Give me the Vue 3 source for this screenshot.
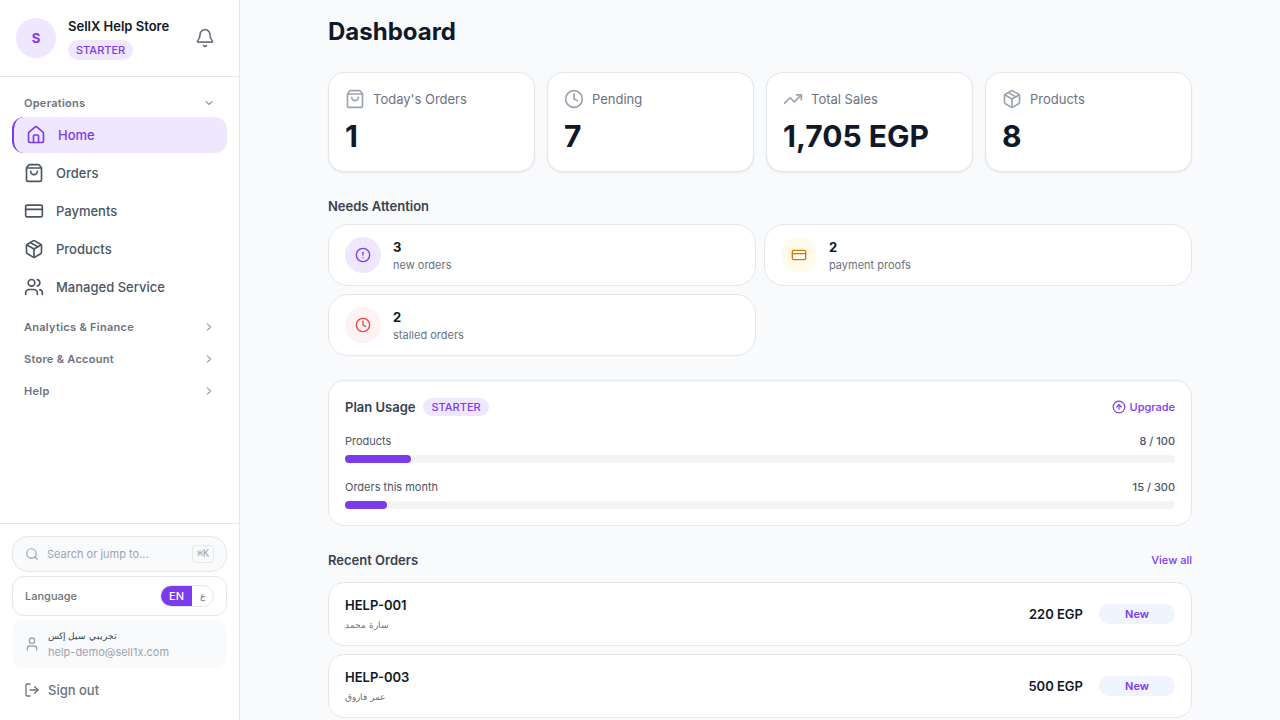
<script setup>
import { ref } from 'vue'

const icons = {
  bell: ['M10.268 21a2 2 0 0 0 3.464 0', 'M3.262 15.326A1 1 0 0 0 4 17h16a1 1 0 0 0 .74-1.673C19.41 13.956 18 12.499 18 8A6 6 0 0 0 6 8c0 4.499-1.411 5.956-2.738 7.326'],
  home: ['M15 21v-8a1 1 0 0 0-1-1h-4a1 1 0 0 0-1 1v8', 'M3 10a2 2 0 0 1 .709-1.528l7-6a2 2 0 0 1 2.582 0l7 6A2 2 0 0 1 21 10v9a2 2 0 0 1-2 2H5a2 2 0 0 1-2-2z'],
  bag: ['M16 10a4 4 0 0 1-8 0', 'M3.103 6.034h17.794', 'M3.4 5.467a2 2 0 0 0-.4 1.2V20a2 2 0 0 0 2 2h14a2 2 0 0 0 2-2V6.667a2 2 0 0 0-.4-1.2l-2-2.667A2 2 0 0 0 17 2H7a2 2 0 0 0-1.6.8z'],
  card: ['M4 5h16a2 2 0 0 1 2 2v10a2 2 0 0 1-2 2H4a2 2 0 0 1-2-2V7a2 2 0 0 1 2-2z', 'M2 10h20'],
  box: ['M11 21.73a2 2 0 0 0 2 0l7-4A2 2 0 0 0 21 16V8a2 2 0 0 0-1-1.73l-7-4a2 2 0 0 0-2 0l-7 4A2 2 0 0 0 3 8v8a2 2 0 0 0 1 1.73z', 'M12 22V12', 'M3.29 7 12 12l8.71-5', 'm7.5 4.27 9 5.15'],
  users: ['M16 21v-2a4 4 0 0 0-4-4H6a4 4 0 0 0-4 4v2', 'M16 3.128a4 4 0 0 1 0 7.744', 'M22 21v-2a4 4 0 0 0-3-3.87', 'M13 7a4 4 0 1 1-8 0 4 4 0 0 1 8 0z'],
  user: ['M19 21v-2a4 4 0 0 0-4-4H9a4 4 0 0 0-4 4v2', 'M16 7a4 4 0 1 1-8 0 4 4 0 0 1 8 0z'],
  search: ['m21 21-4.34-4.34', 'M19 11a8 8 0 1 1-16 0 8 8 0 0 1 16 0z'],
  logout: ['m16 17 5-5-5-5', 'M21 12H9', 'M9 21H5a2 2 0 0 1-2-2V5a2 2 0 0 1 2-2h4'],
  clock: ['M22 12a10 10 0 1 1-20 0 10 10 0 0 1 20 0z', 'M12 6v6l4 2'],
  trend: ['M16 7h6v6', 'm22 7-8.5 8.5-5-5L2 17'],
  alert: ['M22 12a10 10 0 1 1-20 0 10 10 0 0 1 20 0z', 'M12 8v4', 'M12 16h.01'],
  up: ['M22 12a10 10 0 1 1-20 0 10 10 0 0 1 20 0z', 'm16 12-4-4-4 4', 'M12 16V8'],
  down: ['m6 9 6 6 6-6'],
  right: ['m9 18 6-6-6-6'],
}

const nav = [
  { label: 'Home', icon: 'home' },
  { label: 'Orders', icon: 'bag' },
  { label: 'Payments', icon: 'card' },
  { label: 'Products', icon: 'box' },
  { label: 'Managed Service', icon: 'users' },
]
const groups = ['Analytics & Finance', 'Store & Account', 'Help']
const stats = [
  { label: "Today's Orders", value: '1', icon: 'bag' },
  { label: 'Pending', value: '7', icon: 'clock' },
  { label: 'Total Sales', value: '1,705 EGP', icon: 'trend' },
  { label: 'Products', value: '8', icon: 'box' },
]
const attention = [
  { count: 3, label: 'new orders', icon: 'alert', tone: 'violet' },
  { count: 2, label: 'payment proofs', icon: 'card', tone: 'amber' },
  { count: 2, label: 'stalled orders', icon: 'clock', tone: 'red' },
]
const usage = [
  { label: 'Products', used: 8, limit: 100 },
  { label: 'Orders this month', used: 15, limit: 300 },
]
const orders = [
  { id: 'HELP-001', customer: 'سارة محمد', total: '220 EGP', status: 'New' },
  { id: 'HELP-003', customer: 'عمر فاروق', total: '500 EGP', status: 'New' },
]
const active = ref('Home')
const open = ref(true)
const lang = ref('en')
</script>

<template>
  <div class="app">
    <aside class="sidebar">
      <header class="store">
        <div class="avatar">S</div>
        <div class="store-info">
          <div class="store-name">SellX Help Store</div>
          <span class="badge tall">STARTER</span>
        </div>
        <button class="bell" type="button" aria-label="Notifications">
          <svg class="i20" viewBox="0 0 24 24"><path v-for="d in icons.bell" :key="d" :d="d" /></svg>
        </button>
      </header>

      <nav class="nav">
        <button class="group" type="button" :aria-expanded="open" @click="open = !open">
          Operations
          <svg class="i12" viewBox="0 0 24 24"><path v-for="d in icons.down" :key="d" :d="d" /></svg>
        </button>
        <div v-if="open" class="items">
          <a v-for="n in nav" :key="n.label" href="#" class="item" :class="{ active: active === n.label }" @click.prevent="active = n.label">
            <svg class="i20" viewBox="0 0 24 24"><path v-for="d in icons[n.icon]" :key="d" :d="d" /></svg>
            {{ n.label }}
          </a>
        </div>
        <div class="groups">
          <button v-for="g in groups" :key="g" class="group" type="button" aria-expanded="false">
            {{ g }}
            <svg class="i12" viewBox="0 0 24 24"><path v-for="d in icons.right" :key="d" :d="d" /></svg>
          </button>
        </div>
      </nav>

      <footer class="foot">
        <button class="search" type="button">
          <svg class="i14" viewBox="0 0 24 24"><path v-for="d in icons.search" :key="d" :d="d" /></svg>
          <span class="grow">Search or jump to...</span>
          <kbd>⌘K</kbd>
        </button>
        <div class="language">
          <span>Language</span>
          <div class="toggle" role="group" aria-label="Language">
            <button type="button" :class="{ on: lang === 'en' }" @click="lang = 'en'">EN</button>
            <button type="button" class="arabic" :class="{ on: lang === 'ar' }" lang="ar" @click="lang = 'ar'">ع</button>
          </div>
        </div>
        <div class="account">
          <svg class="i16" viewBox="0 0 24 24"><path v-for="d in icons.user" :key="d" :d="d" /></svg>
          <div>
            <div class="acc-name arabic" lang="ar">تجريبي سيل إكس</div>
            <div class="acc-mail">help-demo@sell1x.com</div>
          </div>
        </div>
        <button class="signout" type="button">
          <svg class="i16" viewBox="0 0 24 24"><path v-for="d in icons.logout" :key="d" :d="d" /></svg>
          Sign out
        </button>
      </footer>
    </aside>

    <main class="main">
      <div class="content">
        <h1>Dashboard</h1>

        <section class="stats">
          <article v-for="s in stats" :key="s.label" class="stat">
            <div class="stat-label">
              <svg class="i20" viewBox="0 0 24 24"><path v-for="d in icons[s.icon]" :key="d" :d="d" /></svg>
              {{ s.label }}
            </div>
            <div class="stat-value">{{ s.value }}</div>
          </article>
        </section>

        <section>
          <h2 class="attention-title">Needs Attention</h2>
          <div class="attention">
            <a v-for="a in attention" :key="a.label" href="#" class="alert">
              <span class="dot" :class="a.tone">
                <svg class="i16" viewBox="0 0 24 24"><path v-for="d in icons[a.icon]" :key="d" :d="d" /></svg>
              </span>
              <span>
                <strong>{{ a.count }}</strong>
                <small>{{ a.label }}</small>
              </span>
            </a>
          </div>
        </section>

        <section class="plan">
          <div class="row">
            <div class="plan-title">
              <h2>Plan Usage</h2>
              <span class="badge">STARTER</span>
            </div>
            <a href="#" class="link">
              <svg class="i14" viewBox="0 0 24 24"><path v-for="d in icons.up" :key="d" :d="d" /></svg>
              Upgrade
            </a>
          </div>
          <div v-for="u in usage" :key="u.label">
            <div class="row small">
              <span>{{ u.label }}</span>
              <span class="amount">{{ u.used }} / {{ u.limit }}</span>
            </div>
            <div class="track">
              <div class="fill" :style="{ width: (u.used / u.limit) * 100 + '%' }"></div>
            </div>
          </div>
        </section>

        <section>
          <div class="row orders-head">
            <h2>Recent Orders</h2>
            <a href="#" class="link">View all</a>
          </div>
          <div class="orders">
            <a v-for="o in orders" :key="o.id" href="#" class="order">
              <span class="grow">
                <span class="order-id">{{ o.id }}</span>
                <span class="customer arabic" lang="ar">{{ o.customer }}</span>
              </span>
              <span class="total">{{ o.total }}</span>
              <span class="status">{{ o.status }}</span>
            </a>
          </div>
        </section>
      </div>
    </main>
  </div>
</template>

<style>
body {
  background: #f9fafb;
}
</style>

<style scoped>
.app,
.app * {
  box-sizing: border-box;
}
.app {
  display: flex;
  height: 100vh;
  font-family: Inter, sans-serif;
  font-size: 13px;
  line-height: 20px;
  color: #111827;
  background: #f9fafb;
}
button {
  font: inherit;
  color: inherit;
  background: none;
  border: 0;
  padding: 0;
  text-align: left;
  cursor: pointer;
}
a {
  color: inherit;
  text-decoration: none;
}
h1,
h2 {
  margin: 0;
}
h2 {
  font-size: 13px;
  line-height: 20px;
  font-weight: 600;
  color: #374151;
}
svg {
  flex: none;
  display: block;
  fill: none;
  stroke: currentColor;
  stroke-width: 2;
  stroke-linecap: round;
  stroke-linejoin: round;
}
.i20 {
  width: 20px;
  height: 20px;
}
.i16 {
  width: 16px;
  height: 16px;
}
.i14 {
  width: 14px;
  height: 14px;
}
.i12 {
  width: 12px;
  height: 12px;
  stroke-width: 2.5;
}
.grow {
  flex: 1;
  min-width: 0;
}

.sidebar {
  flex: none;
  width: 240px;
  display: flex;
  flex-direction: column;
  background: #fff;
  border-right: 1px solid #e5e7eb;
}
.store {
  display: flex;
  align-items: center;
  gap: 12px;
  padding: 16px;
  border-bottom: 1px solid #e5e7eb;
}
.avatar {
  display: grid;
  place-items: center;
  width: 40px;
  height: 40px;
  border-radius: 50%;
  background: #efe7fe;
  color: #7c3aed;
  font-weight: 700;
}
.store-info {
  flex: 1;
  display: flex;
  flex-direction: column;
  align-items: flex-start;
  gap: 4px;
}
.store-name {
  font-weight: 600;
}
.badge {
  padding: 1px 8px;
  border-radius: 999px;
  background: #efe7fe;
  color: #7c3aed;
  font-size: 11px;
  line-height: 16px;
  font-weight: 500;
}
.badge.tall {
  padding: 2px 8px;
}
.bell {
  padding: 8px;
  color: #6b7280;
}
.nav {
  flex: 1;
  min-height: 0;
  padding: 12px;
}
.group {
  display: flex;
  align-items: center;
  justify-content: space-between;
  width: 100%;
  padding: 6px 12px;
  font-size: 11px;
  line-height: 16px;
  font-weight: 600;
  letter-spacing: 0.025em;
  color: #6b7280;
}
.group svg {
  color: #9ca3af;
}
.items {
  display: flex;
  flex-direction: column;
  gap: 2px;
}
.item {
  display: flex;
  align-items: center;
  gap: 12px;
  padding: 8px 12px;
  border-radius: 12px;
  font-weight: 500;
  color: #4b5563;
}
.item.active {
  background: #efe7fe;
  color: #7c3aed;
  border-left: 2px solid #7c3aed;
}
.groups {
  display: flex;
  flex-direction: column;
  gap: 4px;
  margin-top: 8px;
}
.foot {
  display: flex;
  flex-direction: column;
  gap: 4px;
  padding: 12px;
  border-top: 1px solid #e5e7eb;
}
.search,
.language,
.account,
.signout {
  display: flex;
  align-items: center;
  padding: 0 12px;
  font-size: 11px;
  line-height: 16px;
}
.search {
  gap: 8px;
  min-height: 36px;
  border: 1px solid #e5e7eb;
  border-radius: 16px;
  background: #f9fafb;
  color: #9ca3af;
}
kbd {
  padding: 0 4px;
  border: 1px solid #e5e7eb;
  border-radius: 4px;
  font-family: "DejaVu Sans Mono", monospace;
  font-size: 10px;
  line-height: 16px;
}
.language {
  justify-content: space-between;
  min-height: 40px;
  border: 1px solid #e5e7eb;
  border-radius: 12px;
  color: #6b7280;
  font-weight: 500;
}
.toggle {
  display: flex;
  overflow: hidden;
  border: 1px solid #e5e7eb;
  border-radius: 999px;
}
.toggle button {
  padding: 2px 8px;
}
.toggle .on {
  background: #7c3aed;
  color: #fff;
}
.account {
  gap: 8px;
  min-height: 48px;
  border-radius: 12px;
  background: #f9fafb;
  color: #9ca3af;
}
.acc-name {
  color: #374151;
  font-weight: 500;
}
.signout {
  gap: 8px;
  min-height: 36px;
  font-size: 13px;
  line-height: 20px;
  font-weight: 500;
  color: #6b7280;
}

.main {
  flex: 1;
  min-width: 0;
  overflow: hidden auto;
  scrollbar-width: none;
}
.content {
  display: flex;
  flex-direction: column;
  gap: 24px;
  max-width: 896px;
  margin: 0 auto;
  padding: 16px;
}
h1 {
  font-size: 24px;
  line-height: 32px;
  font-weight: 700;
}
.stats {
  display: grid;
  grid-template-columns: repeat(4, 1fr);
  gap: 12px;
}
.stat {
  padding: 16px;
  border: 1px solid #e5e7eb;
  border-radius: 16px;
  background: #fff;
  box-shadow: 0 1px 2px rgba(0, 0, 0, 0.08);
}
.stat-label {
  display: flex;
  align-items: center;
  gap: 8px;
  margin-bottom: 8px;
  color: #6b7280;
}
.stat-label svg {
  color: #9ca3af;
}
.stat-value {
  font-size: 30px;
  line-height: 38px;
  font-weight: 700;
}
.attention-title {
  margin-bottom: 8px;
}
.attention {
  display: grid;
  grid-template-columns: repeat(2, 1fr);
  gap: 8px;
}
.alert {
  display: flex;
  align-items: center;
  gap: 12px;
  padding: 12px 16px;
  border: 1px solid #e5e7eb;
  border-radius: 20px;
  background: #fff;
}
.dot {
  display: grid;
  place-items: center;
  width: 36px;
  height: 36px;
  border-radius: 50%;
}
.violet {
  background: #efe7fe;
  color: #7c3aed;
}
.amber {
  background: #fffbeb;
  color: #d97706;
}
.red {
  background: #fef2f2;
  color: #ef4444;
}
.alert strong,
.alert small {
  display: block;
}
.alert strong {
  font-weight: 700;
}
.alert small {
  font-size: 11px;
  line-height: 16px;
  color: #6b7280;
}
.plan {
  display: flex;
  flex-direction: column;
  gap: 16px;
  padding: 16px;
  border: 1px solid #e5e7eb;
  border-radius: 16px;
  background: #fff;
}
.row {
  display: flex;
  align-items: center;
  justify-content: space-between;
}
.plan-title {
  display: flex;
  align-items: center;
  gap: 8px;
}
.link {
  display: flex;
  align-items: center;
  gap: 4px;
  font-size: 11px;
  line-height: 16px;
  font-weight: 500;
  color: #7c3aed;
}
.small {
  margin-bottom: 6px;
  font-size: 11px;
  line-height: 16px;
  color: #4b5563;
}
.amount {
  font-weight: 500;
}
.track {
  height: 8px;
  border-radius: 4px;
  background: #f3f4f6;
}
.fill {
  height: 8px;
  border-radius: 4px;
  background: #7c3aed;
}
.orders-head {
  margin-bottom: 12px;
}
.orders {
  display: flex;
  flex-direction: column;
  gap: 8px;
}
.order {
  display: flex;
  align-items: center;
  gap: 16px;
  padding: 12px 16px;
  border: 1px solid #e5e7eb;
  border-radius: 16px;
  background: #fff;
}
.order-id,
.customer {
  display: block;
}
.order-id,
.total {
  font-weight: 600;
}
.customer {
  margin-top: 2px;
  line-height: 16px;
  color: #6b7280;
}
.arabic {
  font-size: 9px;
}
.status {
  width: 76px;
  padding: 2px 8px;
  border-radius: 999px;
  background: #f0f4ff;
  color: #7c3aed;
  font-size: 11px;
  line-height: 16px;
  font-weight: 600;
  text-align: center;
}
</style>
